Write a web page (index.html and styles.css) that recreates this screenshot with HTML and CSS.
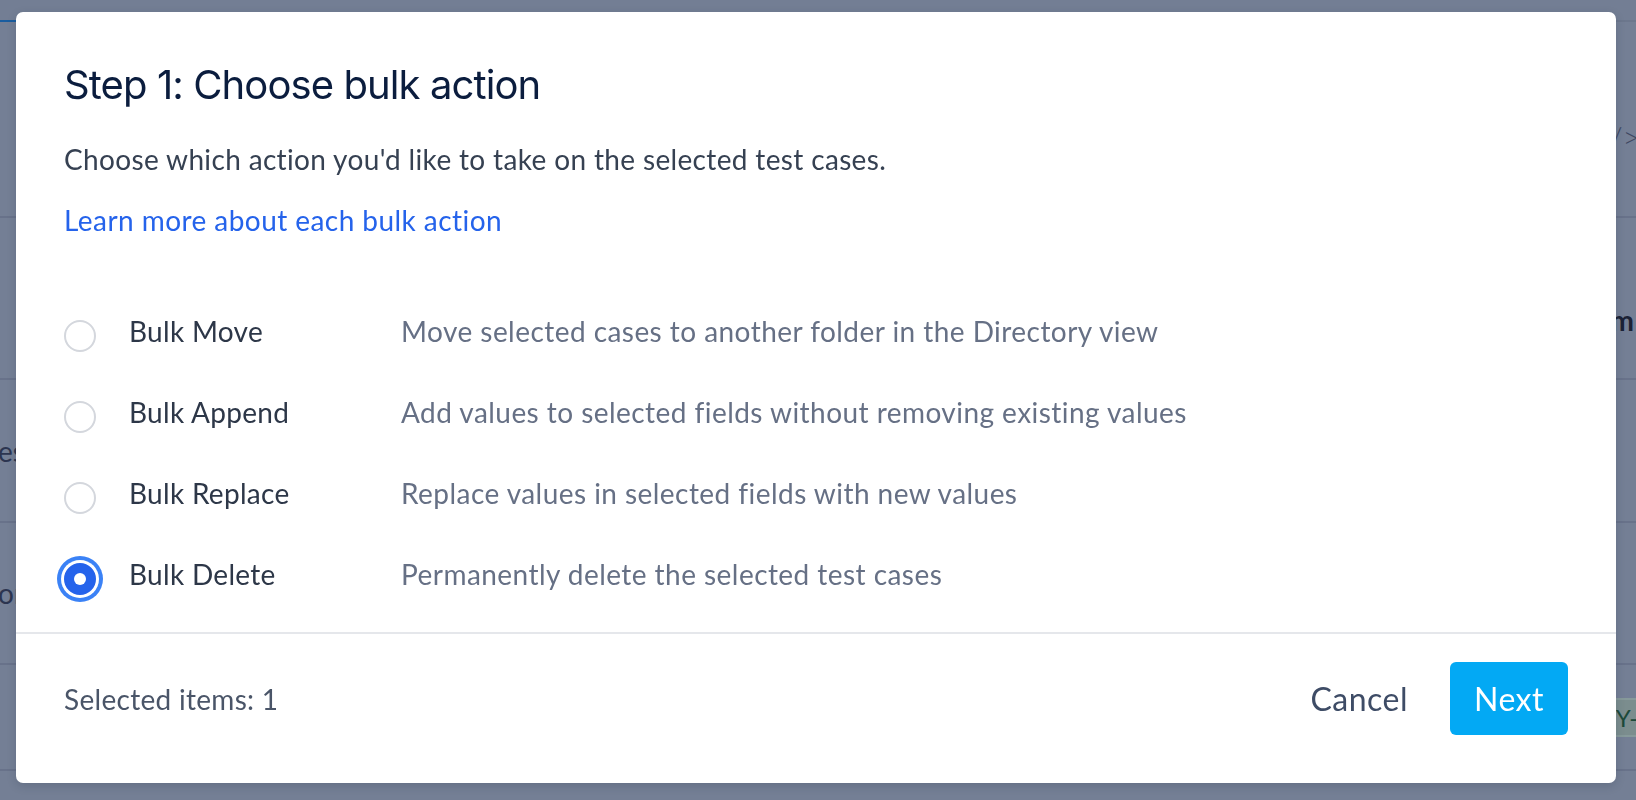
FILE: index.html
```html
<!DOCTYPE html>
<html lang="en">
<head>
<meta charset="utf-8">
<title>Step 1: Choose bulk action</title>
<link rel="stylesheet" href="styles.css">
</head>
<body>
  <div class="page">
    <div class="page-top"></div>
    <div class="page-row row-a"><span class="frag code">/&gt;</span></div>
    <div class="page-row row-b"><span class="frag bold">m</span></div>
    <div class="page-row row-c"><span class="frag-left">es</span></div>
    <div class="page-row row-d"><span class="frag-left">or</span></div>
    <div class="page-row row-e"><span class="frag badge">Y-0</span></div>
    <div class="page-row row-f"></div>
  </div>

  <div class="overlay">
    <div class="modal" role="dialog">
      <div class="modal-body">
        <h2 class="title">Step 1: Choose bulk action</h2>
        <p class="lead">Choose which action you'd like to take on the selected test cases.</p>
        <a class="learn" href="#">Learn more about each bulk action</a>
        <ul class="options">
          <li class="option">
            <span class="radio"></span>
            <span class="opt-label">Bulk Move</span>
            <span class="opt-desc">Move selected cases to another folder in the Directory view</span>
          </li>
          <li class="option">
            <span class="radio"></span>
            <span class="opt-label">Bulk Append</span>
            <span class="opt-desc">Add values to selected fields without removing existing values</span>
          </li>
          <li class="option">
            <span class="radio"></span>
            <span class="opt-label">Bulk Replace</span>
            <span class="opt-desc">Replace values in selected fields with new values</span>
          </li>
          <li class="option">
            <span class="radio checked"></span>
            <span class="opt-label">Bulk Delete</span>
            <span class="opt-desc">Permanently delete the selected test cases</span>
          </li>
        </ul>
      </div>
      <div class="modal-footer">
        <span class="count">Selected items: 1</span>
        <div class="actions">
          <button class="btn-cancel" type="button">Cancel</button>
          <button class="btn-next" type="button">Next</button>
        </div>
      </div>
    </div>
  </div>
</body>
</html>
```
FILE: styles.css
```css
* { box-sizing: border-box; }

html, body {
  margin: 0;
  padding: 0;
  width: 1636px;
  height: 800px;
  overflow: hidden;
}

body {
  background: #747f95;
  font-family: Lato, "Open Sans", sans-serif;
}

/* dimmed page behind the dialog */
.page {
  display: flex;
  flex-direction: column;
  height: 800px;
}

.page-top {
  height: 22px;
  flex: none;
  background-color: #737e94;
  background-image:
    linear-gradient(to right, #1a5d9f 0, #1a5d9f 18px, #6c778d 18px);
  background-size: 100% 2px;
  background-position: 0 bottom;
  background-repeat: no-repeat;
}

.page-row {
  display: flex;
  align-items: center;
  justify-content: flex-end;
  border-bottom: 2px solid #68728a;
  flex: none;
  font-size: 28px;
  color: #2c3550;
}

.row-a { height: 196px; align-items: flex-start; padding-top: 96px; }
.row-b { height: 162px; align-items: flex-start; padding-top: 85px; }
.row-c { height: 143px; justify-content: flex-start; }
.row-d { height: 142px; justify-content: flex-start; }
.row-e { height: 106px; }
.row-f { flex: 1; border-bottom: none; }

.frag { white-space: nowrap; }
.frag-left { margin-left: -2px; white-space: nowrap; }

.code { font-size: 30px; font-weight: 300; color: #3e4862; margin-right: -4px; }
.bold { font-weight: 700; color: #1b2236; margin-right: 2px; }
.badge {
  font-size: 24px;
  color: #1d4a3a;
  background: #7b8d8e;
  border: 2px solid #86999a;
  border-radius: 4px;
  padding: 3px 6px 3px 3px;
  margin-right: -24px;
}

/* dialog */
.overlay {
  position: fixed;
  inset: 0;
  padding: 12px 20px 17px 16px;
}

.modal {
  width: 1600px;
  height: 771px;
  background: #ffffff;
  border-radius: 7px;
  box-shadow: 0 3px 10px rgba(30, 40, 60, 0.18);
  display: flex;
  flex-direction: column;
}

.modal-body {
  padding: 49px 48px 17px 48px;
  flex: 1;
}

.title {
  margin: 0;
  font-family: Inter, Roboto, sans-serif;
  font-weight: 400;
  font-size: 40px;
  line-height: 48px;
  letter-spacing: -0.9px;
  color: #0b1d3e;
}

.lead {
  margin: 30px 0 0 0;
  font-size: 28px;
  line-height: 40px;
  letter-spacing: 0.35px;
  color: #364152;
}

.learn {
  display: block;
  margin-top: 21px;
  font-size: 28px;
  line-height: 40px;
  letter-spacing: 0.44px;
  color: #2563eb;
  text-decoration: none;
}

.options {
  list-style: none;
  margin: 51px 0 0 0;
  padding: 0;
}

.option {
  display: flex;
  align-items: flex-start;
  padding: 20px 0;
  font-size: 28px;
  line-height: 40px;
}

.radio {
  flex: none;
  width: 32px;
  height: 32px;
  margin-top: 9px;
  border: 2px solid #d4d7dd;
  border-radius: 50%;
  background: #fff;
  display: flex;
  align-items: center;
  justify-content: center;
}

.radio.checked {
  background: #2563eb;
  border-color: #2563eb;
  box-shadow: 0 0 0 3px #ffffff, 0 0 0 7px #3b82f6;
}

.radio.checked::after {
  content: "";
  width: 12px;
  height: 12px;
  border-radius: 50%;
  background: #ffffff;
}

.opt-label {
  width: 305px;
  padding-left: 33px;
  flex: none;
  letter-spacing: 0.3px;
  color: #2d3748;
}

.opt-desc {
  letter-spacing: 0.45px;
  color: #667085;
}

.modal-footer {
  border-top: 2px solid #e5e7eb;
  padding: 28px 48px 48px 48px;
  display: flex;
  align-items: center;
  justify-content: space-between;
}

.count {
  font-size: 28px;
  line-height: 40px;
  letter-spacing: 0.3px;
  color: #4a5568;
}

.actions {
  display: flex;
  align-items: center;
  gap: 18px;
}

.btn-cancel,
.btn-next {
  font-family: Lato, "Open Sans", sans-serif;
  font-size: 32px;
  letter-spacing: 0.5px;
  height: 73px;
  padding: 0 24px;
  border: none;
  border-radius: 6px;
  cursor: pointer;
}

.btn-cancel {
  background: transparent;
  color: #3e4c66;
}

.btn-next {
  width: 118px;
  padding: 0;
  background: #03a9f4;
  color: #ffffff;
}
```
